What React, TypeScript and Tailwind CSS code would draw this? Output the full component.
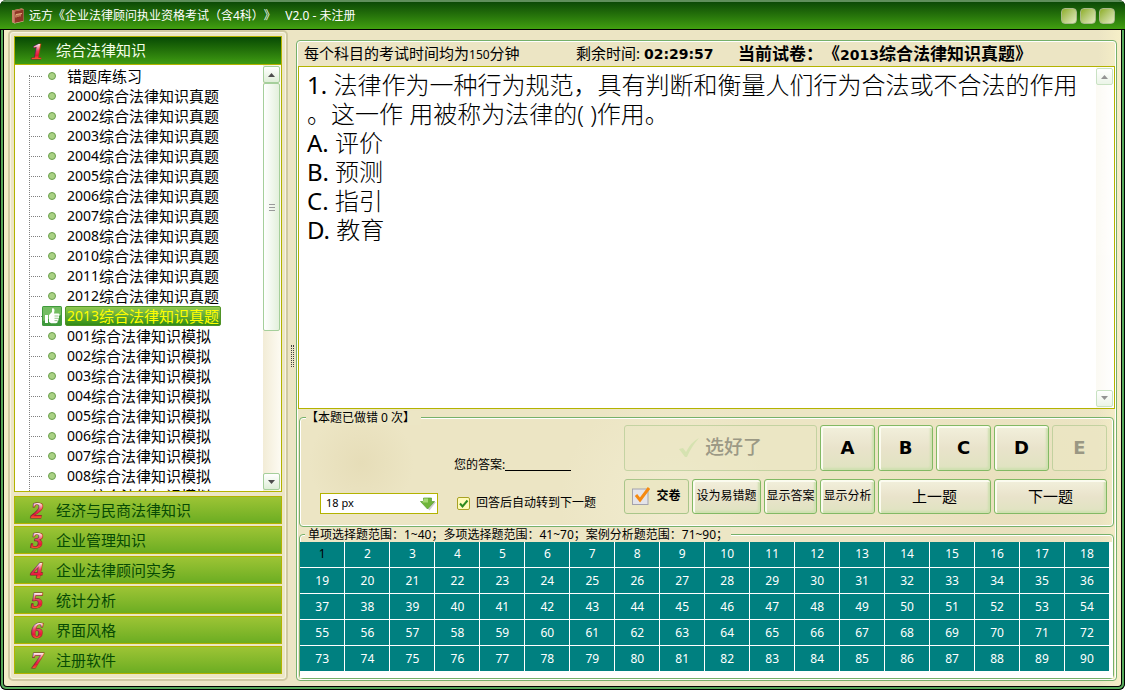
import { useState, type ReactNode } from 'react';

const years = ['2000', '2002', '2003', '2004', '2005', '2006', '2007', '2008', '2010', '2011', '2012', '2013'];
const mocks = ['001', '002', '003', '004', '005', '006', '007', '008', '009'];

const papers = [
  { num: '', name: '错题库练习' },
  ...years.map((num) => ({ num, name: '综合法律知识真题' })),
  ...mocks.map((num) => ({ num, name: '综合法律知识模拟' })),
];

const subjects = ['经济与民商法律知识', '企业管理知识', '企业法律顾问实务', '统计分析', '界面风格', '注册软件'];

const options = [
  { key: 'A', text: '评价' },
  { key: 'B', text: '预测' },
  { key: 'C', text: '指引' },
  { key: 'D', text: '教育' },
];

const rows = Array.from({ length: 5 }, (_, r) => Array.from({ length: 18 }, (_, c) => r * 18 + c + 1));

const frame = 'border border-[#76b06a] rounded-[4px] shadow-[inset_0_0_0_1px_#ffffff]';
const bevel =
  'border border-[#82b964] rounded-[3px] bg-gradient-to-b from-[#f2f0dc] via-[#e9e3cb] to-[#dfe3c0] shadow-[inset_1px_1px_0_1px_#fbfbef,inset_-2px_-2px_2px_#cfe0b0] text-black whitespace-nowrap';
const flat = 'border border-[#a9c68a] rounded-[3px] bg-[#ebe7c4] whitespace-nowrap';

function Digit({ children }: { children: ReactNode }) {
  return (
    <svg width="22" height="26" viewBox="0 0 22 26" aria-hidden="true">
      <defs>
        <linearGradient id="digit" gradientUnits="userSpaceOnUse" x1="0" y1="4" x2="0" y2="22">
          <stop offset="0.1" stopColor="#fff4f6" />
          <stop offset="0.5" stopColor="#ea3a5e" />
          <stop offset="0.75" stopColor="#e8163c" />
          <stop offset="1" stopColor="#ff6a2a" />
        </linearGradient>
      </defs>
      <text
        x="11"
        y="21"
        textAnchor="middle"
        fontFamily="Liberation Serif, serif"
        fontSize="24"
        fontWeight="700"
        fontStyle="italic"
        fill="url(#digit)"
        stroke="#7c2a2c"
        strokeWidth="1.2"
        paintOrder="stroke"
      >
        {children}
      </text>
    </svg>
  );
}

function ScrollButton({ up }: { up?: boolean }) {
  return (
    <button
      aria-label={up ? 'up' : 'down'}
      className="flex h-[17px] w-[17px] items-center justify-center rounded-[2px] border border-[#a5cf9b] bg-gradient-to-b from-white to-[#dfeed8]"
    >
      <svg width="7" height="4" viewBox="0 0 7 4">
        <path d={up ? 'M0 4L3.5 0L7 4z' : 'M0 0L3.5 4L7 0z'} fill="#4d4d4d" />
      </svg>
    </button>
  );
}

function Thumb() {
  return (
    <svg width="20" height="20" viewBox="0 0 20 20" aria-hidden="true">
      <rect width="20" height="20" rx="1.5" fill="#3f9a3c" />
      <path d="M1 1h18v8L1 15z" fill="#74bd62" />
      <path d="M3 9h3v8H3z" fill="#fff" />
      <path d="M7 9l3-3V2.500q2.500-1 2.500 2L12 7.500h4.500q1.500.2 1 1.700l-.6 1 .2 1.500-.7 1 .1 1.500-.9 1-.1 1.300-1.500.8H9L7 16z" fill="#fff" />
      <path d="M12.500 10h4M12.500 12.300h4M12.500 14.600h3" stroke="#6aae5c" strokeWidth="0.7" />
    </svg>
  );
}

function Book() {
  return (
    <svg width="14" height="16" viewBox="0 0 14 16" aria-hidden="true">
      <path d="M1 2.500L10.500 0.500L12.500 1v12.500L3.500 15.500L1 14z" fill="#e9cfae" />
      <path d="M1 2.500L3.500 3.500V15.500L1 14z" fill="#c98468" />
      <path d="M1 2.500L10.500 0.500L12.500 1.500L3.500 3.500z" fill="#b5664a" />
      <path d="M3.500 3.500L12.500 1.500V13L3.500 15z" fill="#8f3626" />
      <path d="M5 6.500V9.500M7 6.200V9M9 5.800V8.500M5 6.500l6-1" stroke="#f0c48a" strokeWidth="0.9" fill="none" />
    </svg>
  );
}

function Sidebar() {
  return (
    <aside className="flex w-[280px] shrink-0 flex-col gap-[2px] rounded-[5px] border-2 border-[#cfc9a2] bg-[#ece6c6] p-1 pb-[5px] shadow-[inset_0_0_0_1px_#f8f5e2]">
      <div className="mb-[2px] flex min-h-0 flex-1 flex-col border border-[#b3b300]">
        <button className="flex h-[28px] shrink-0 items-center gap-[8px] border-b border-[#b3b300] bg-gradient-to-b from-[#064a04] to-[#3f9c12] pl-[11px] text-[15px] text-[#f4ffe8]">
          <Digit>1</Digit>
          综合法律知识
        </button>
        <div className="flex min-h-0 flex-1 bg-white">
          <ul className="relative flex-1 overflow-hidden pt-px pl-[14px] text-[15px] leading-[20px] text-black">
            <li className="absolute top-[10px] bottom-0 left-[14px] border-l border-dotted border-[#808080]" />
            {papers.map((p) => {
              const active = p.num === '2013';
              return (
                <li key={p.num + p.name} className="flex h-[20px] items-center">
                  <span className="w-[13px] border-t border-dotted border-[#808080]" />
                  <span className="flex w-[20px] justify-center">
                    {active ? (
                      <Thumb />
                    ) : (
                      <i className="h-[8px] w-[8px] rounded-full border border-[#6a9f4c] bg-[#a9d184]" />
                    )}
                  </span>
                  <a
                    href="#"
                    className={
                      active
                        ? 'ml-[3px] flex h-[20px] items-center rounded-[2px] border border-[#4f9326] bg-gradient-to-b from-[#90c850] to-[#2f8c14] px-px text-[#ffff00]'
                        : 'ml-[5px] flex h-[20px] items-center'
                    }
                  >
                    {p.num && <span className="text-[14px]">{p.num}</span>}
                    {p.name}
                  </a>
                </li>
              );
            })}
          </ul>
          <div className="flex w-[18px] flex-col bg-gradient-to-r from-[#f2ecd6] to-[#fdfbf3] py-px">
            <ScrollButton up />
            <div className="flex h-[248px] w-[17px] items-center justify-center rounded-[2px] border border-[#a5cf9b] bg-gradient-to-r from-white to-[#e3f0dc]">
              <span className="h-[7px] w-[6px] border-y border-[#9a9a9a] py-[2px]">
                <span className="block h-px bg-[#9a9a9a]" />
              </span>
            </div>
            <div className="flex-1" />
            <ScrollButton />
          </div>
        </div>
      </div>
      {subjects.map((s, i) => (
        <button
          key={s}
          className="flex h-[28px] shrink-0 items-center gap-[8px] border border-[#b3b300] bg-gradient-to-b from-[#9dc435] to-[#6bad22] pl-[11px] text-[15px] text-[#064a04]"
        >
          <Digit>{i + 2}</Digit>
          {s}
        </button>
      ))}
    </aside>
  );
}

function Question() {
  return (
    <div className="flex min-h-0 flex-1 border border-[#b3b300] bg-white">
      <div className="flex-1 pt-[3px] pl-[8px] text-[24px] leading-[29px] font-light text-black">
        <p className="whitespace-nowrap">
          <span className="font-normal">1.</span> 法律作为一种行为规范，具有判断和衡量人们行为合法或不合法的作用
        </p>
        <p>。这一作 用被称为法律的( )作用。</p>
        {options.map((o) => (
          <p key={o.key}>
            <span className="font-normal">{o.key}.</span> {o.text}
          </p>
        ))}
      </div>
      <div className="flex w-[18px] flex-col justify-between bg-gradient-to-r from-[#faf7ec] to-white py-px opacity-60">
        <ScrollButton up />
        <ScrollButton />
      </div>
    </div>
  );
}

function Controls() {
  const [auto, setAuto] = useState(true);
  return (
    <fieldset className={`${frame} mx-px mt-[2px] h-[116px] px-[6px]`}>
      <legend className="bg-[#ece6c5] pr-[6px] text-[12px] leading-[14px] text-black">【本题已做错 0 次】</legend>
      <div className="flex justify-between">
        <div className="flex flex-1 flex-col justify-end gap-[20px] pl-[14px]">
          <label className="ml-[134px] flex items-center text-[12px] leading-[16px]">
            您的答案:
            <input className="h-[12px] w-[66px] border-b border-black bg-transparent text-[12px] outline-none" />
          </label>
          <div className="flex items-center gap-[19px]">
            <div className="relative">
              <select
                aria-label="font size"
                className="block h-[21px] w-[118px] appearance-none border border-[#b3b300] bg-white px-[5px] text-[11px] text-black"
              >
                <option>18 px</option>
                <option>20 px</option>
              </select>
              <svg className="pointer-events-none absolute top-[4px] right-[2px]" width="16" height="14" viewBox="0 0 16 14">
                <path d="M2 5h14L9.500 13.500z" fill="#b8b8b8" opacity="0.7" />
                <path d="M3.500 1h8v3.500h3L7.500 12L0.500 4.500h3z" fill="#6fb53a" stroke="#5a9c34" strokeWidth="0.7" />
                <path d="M4 1.500h4v4H2.500z" fill="#a5d874" />
              </svg>
            </div>
            <label className="flex items-center gap-[6px] text-[12px] text-black">
              <span className="relative flex">
                <input
                  type="checkbox"
                  checked={auto}
                  onChange={() => setAuto(!auto)}
                  className="h-[13px] w-[13px] appearance-none rounded-[2px] border border-[#a8a224] bg-[#fffbb8]"
                />
                {auto && (
                  <svg className="pointer-events-none absolute inset-0" width="13" height="13" viewBox="0 0 13 13">
                    <path d="M3 6.500L5.500 9.500L10.500 3.500" fill="none" stroke="#2e8b1e" strokeWidth="2" />
                  </svg>
                )}
              </span>
              回答后自动转到下一题
            </label>
          </div>
        </div>
        <div className="grid grid-cols-[65px_69px_53px_repeat(5,55px)] grid-rows-[46px_35px] gap-x-[3px] gap-y-[8px] text-[12px]">
          <button disabled className={`${flat} col-span-3 flex items-center justify-center gap-[6px] text-[19px] font-medium text-[#66665a] opacity-60`}>
            <svg width="20" height="20" viewBox="0 0 20 20">
              <path d="M0 11l4-1 3 4Q12 4 20 0Q12 9 8 19H6z" fill="#c6dfa0" />
            </svg>
            选好了
          </button>
          {['A', 'B', 'C', 'D'].map((k) => (
            <button key={k} className={`${bevel} font-['DejaVu_Sans',sans-serif] text-[18px] font-bold`}>
              {k}
            </button>
          ))}
          <button disabled className={`${flat} font-['DejaVu_Sans',sans-serif] text-[18px] font-bold text-[#66665a] opacity-60`}>
            E
          </button>
          <button className={`${flat} flex items-center justify-center gap-[6px] font-bold`}>
            <svg width="18" height="18" viewBox="0 0 18 18">
              <rect x="0.500" y="2" width="15.500" height="15.500" fill="#e4e4ea" stroke="#a3a3ad" />
              <path d="M4 8l4 5L17 1" fill="none" stroke="#f58a12" strokeWidth="3" />
            </svg>
            交卷
          </button>
          <button className={bevel}>设为易错题</button>
          <button className={bevel}>显示答案</button>
          <button className={bevel}>显示分析</button>
          <button className={`${bevel} col-span-2 text-[15px]`}>上一题</button>
          <button className={`${bevel} col-span-2 text-[15px]`}>下一题</button>
        </div>
      </div>
    </fieldset>
  );
}

function AnswerSheet() {
  return (
    <fieldset className={`${frame} mx-px mt-px`}>
      <legend className="ml-[5px] bg-[#ece6c5] px-[3px] text-[12px] leading-[14px] text-black">
        单项选择题范围：1~40；多项选择题范围：41~70；案例分析题范围：71~90；
      </legend>
      <div className="bg-white pr-[3px] pb-[6px]">
        <table className="w-full table-fixed border-collapse text-center text-[12px] text-white">
          <tbody>
            {rows.map((row) => (
              <tr key={row[0]} className="h-[26px]">
                {row.map((n) => (
                  <td key={n} className={`border-r border-b border-white bg-[#008080] p-0 ${n === 1 ? 'text-black' : ''}`}>
                    {n}
                  </td>
                ))}
              </tr>
            ))}
          </tbody>
        </table>
      </div>
    </fieldset>
  );
}

export default function App() {
  return (
    <div className="flex h-screen min-h-[690px] flex-col overflow-hidden rounded-[6px] bg-black font-['Noto_Sans','Noto_Sans_CJK_SC',sans-serif] text-black [text-spacing-trim:space-all]">
      <header className="flex h-[30px] shrink-0 items-center gap-[4px] border-t-2 border-b border-t-[#5f8f5c] border-b-black bg-gradient-to-b from-[#0b4a06] to-[#41a010] pr-[10px] pl-[11px] text-white">
        <Book />
        <h1 className="text-[12px] whitespace-pre">远方《企业法律顾问执业资格考试（含4科）》   V2.0 - 未注册</h1>
        <div className="ml-auto flex gap-[3px]">
          {['minimize', 'maximize', 'close'].map((b) => (
            <button
              key={b}
              aria-label={b}
              className="h-[16px] w-[16px] rounded-[4px] border border-[#a9b98a] bg-gradient-to-br from-[#8fae1c] to-[#e4ebc0]"
            />
          ))}
        </div>
      </header>
      <div className="flex min-h-0 flex-1 rounded-b-[6px] border border-t-0 border-black bg-[#57a95a] px-[2px] pb-[2px]">
        <div className="flex min-w-0 flex-1 rounded-b-[4px] border border-t-0 border-black bg-[#ece5c4] bg-[radial-gradient(circle_at_32%_66%,#e6ddb8_0,transparent_6%),radial-gradient(circle_at_60%_72%,#f1ecd0_0,transparent_14%),radial-gradient(circle_at_90%_72%,#e9e0bd_0,transparent_12%),linear-gradient(to_right,#f4eec8,#ece5c4_2%,#ece5c4_98%,#f6efc8)] px-[4px] pb-[5px]">
          <Sidebar />
          <div className="flex w-[8px] items-center justify-center">
            <span className="h-[22px] w-[3px] border-x border-dotted border-[#404040]" />
          </div>
          <main className={`${frame} mt-[10px] flex min-w-0 flex-1 flex-col p-px pt-0`}>
            <div className="flex h-[25px] shrink-0 items-center text-[15px] whitespace-nowrap">
              <span className="w-[278px] pl-[6px]">
                每个科目的考试时间均为<span className="text-[12px]">150</span>分钟
              </span>
              <span className="w-[162px]">
                剩余时间: <b className="font-['DejaVu_Sans',sans-serif] text-[14px]">02:29:57</b>
              </span>
              <b className="text-[17px]">
                当前试卷：《<span className="font-['DejaVu_Sans',sans-serif] text-[14px]">2013</span>综合法律知识真题》
              </b>
            </div>
            <Question />
            <Controls />
            <AnswerSheet />
          </main>
        </div>
      </div>
    </div>
  );
}
